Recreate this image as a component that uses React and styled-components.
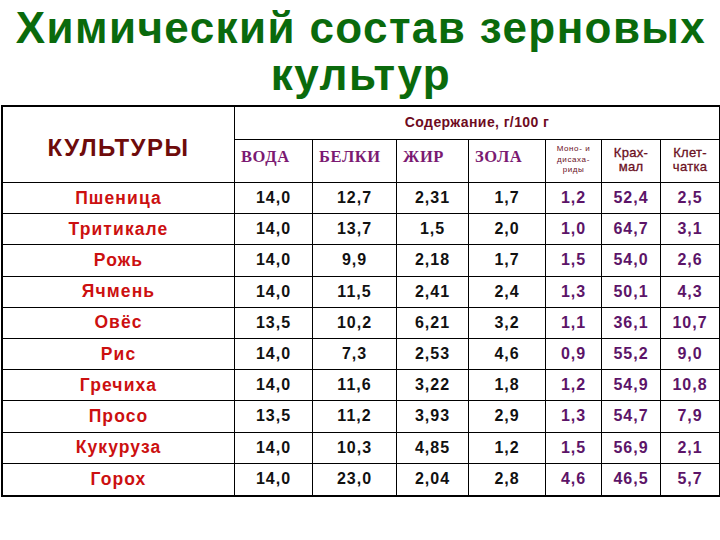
import React from "react";
import styled, { createGlobalStyle } from "styled-components";

const GlobalStyle = createGlobalStyle`
  html, body {
    margin: 0;
    padding: 0;
    background: #ffffff;
  }
  body {
    font-family: "Liberation Sans", Arial, sans-serif;
  }
`;

const PageUI = styled.div`
  width: 720px;
  height: 540px;
  overflow: hidden;
  background: #fff;
`;

const TitleUI = styled.h1`
  margin: 0;
  height: 105px;
  box-sizing: border-box;
  padding: 4px 0 0 2px;
  text-align: center;
  font-family: "Liberation Sans", Arial, sans-serif;
  font-weight: 700;
  font-size: 44px;
  line-height: 47px;
  letter-spacing: 1.4px;
  color: #0a6a0c;
`;

const TableUI = styled.table`
  margin-left: 1px;
  width: 719px;
  table-layout: fixed;
  border-collapse: separate;
  border-spacing: 0;
  border-top: 2px solid #000;
  border-left: 2px solid #000;
  border-bottom: 2px solid #000;
`;

const CellUI = styled.td`
  box-sizing: border-box;
  padding: 0;
  height: ${(p) => p.$h || "31.2px"};
  border-right: 1px solid #000;
  border-bottom: ${(p) => (p.$last ? "none" : "1px solid #000")};
  text-align: center;
  vertical-align: middle;
  font-family: "Liberation Sans", Arial, sans-serif;
  font-weight: 700;
  font-size: 16px;
  letter-spacing: 1px;
  color: ${(p) => (p.$accent ? "#5c1468" : "#111")};
`;

const CropUI = styled(CellUI)`
  font-size: 17.5px;
  letter-spacing: 1.1px;
  color: #cc1010;
`;

const CropsHeadUI = styled(CellUI)`
  font-size: 24px;
  letter-spacing: 1.5px;
  color: #6e0b0b;
  padding-top: 6px;
`;

const GroupHeadUI = styled(CellUI)`
  font-size: 14px;
  letter-spacing: 0.4px;
  color: #6e0b1e;
  padding-bottom: 2px;
`;

const SerifHeadUI = styled(CellUI)`
  text-align: left;
  padding: 0 0 8px 6px;
  font-family: "Liberation Serif", "Times New Roman", serif;
  font-size: 16.5px;
  letter-spacing: 0.6px;
  color: #7b1a72;
`;

const SmallHeadUI = styled(CellUI)`
  font-weight: 400;
  font-size: ${(p) => p.$size || "13px"};
  line-height: ${(p) => p.$lh || "14px"};
  letter-spacing: ${(p) => p.$ls || "0.3px"};
  color: #6b0f1e;
  padding-bottom: 2px;
  -webkit-text-stroke: ${(p) => (p.$heavy ? "0.3px #6b0f1e" : "0")};
`;

const widths = [232, 78, 84, 72, 77, 56, 59, 59];

const crops = [
  ["Пшеница", "14,0", "12,7", "2,31", "1,7", "1,2", "52,4", "2,5"],
  ["Тритикале", "14,0", "13,7", "1,5", "2,0", "1,0", "64,7", "3,1"],
  ["Рожь", "14,0", "9,9", "2,18", "1,7", "1,5", "54,0", "2,6"],
  ["Ячмень", "14,0", "11,5", "2,41", "2,4", "1,3", "50,1", "4,3"],
  ["Овёс", "13,5", "10,2", "6,21", "3,2", "1,1", "36,1", "10,7"],
  ["Рис", "14,0", "7,3", "2,53", "4,6", "0,9", "55,2", "9,0"],
  ["Гречиха", "14,0", "11,6", "3,22", "1,8", "1,2", "54,9", "10,8"],
  ["Просо", "13,5", "11,2", "3,93", "2,9", "1,3", "54,7", "7,9"],
  ["Кукуруза", "14,0", "10,3", "4,85", "1,2", "1,5", "56,9", "2,1"],
  ["Горох", "14,0", "23,0", "2,04", "2,8", "4,6", "46,5", "5,7"],
];

export default function App() {
  return (
    <>
      <GlobalStyle />
      <PageUI>
        <TitleUI>
          Химический состав зерновых
          <br />
          культур
        </TitleUI>

        <TableUI>
          <colgroup>
            {widths.map((w, i) => (
              <col key={i} style={{ width: w }} />
            ))}
          </colgroup>
          <tbody>
            <tr>
              <CropsHeadUI rowSpan={2}>КУЛЬТУРЫ</CropsHeadUI>
              <GroupHeadUI colSpan={7} $h="33px">
                Содержание, г/100 г
              </GroupHeadUI>
            </tr>
            <tr>
              <SerifHeadUI $h="43px">ВОДА</SerifHeadUI>
              <SerifHeadUI>БЕЛКИ</SerifHeadUI>
              <SerifHeadUI>ЖИР</SerifHeadUI>
              <SerifHeadUI>ЗОЛА</SerifHeadUI>
              <SmallHeadUI $size="8px" $lh="10.5px" $ls="0.6px">
                Моно- и
                <br />
                дисаха-
                <br />
                риды
              </SmallHeadUI>
              <SmallHeadUI $heavy>
                Крах-
                <br />
                мал
              </SmallHeadUI>
              <SmallHeadUI $heavy>
                Клет-
                <br />
                чатка
              </SmallHeadUI>
            </tr>
            {crops.map((row, r) => {
              const last = r === crops.length - 1;
              return (
                <tr key={row[0]}>
                  <CropUI $last={last}>{row[0]}</CropUI>
                  {row.slice(1).map((v, i) => (
                    <CellUI key={i} $last={last} $accent={i >= 4}>
                      {v}
                    </CellUI>
                  ))}
                </tr>
              );
            })}
          </tbody>
        </TableUI>
      </PageUI>
    </>
  );
}
